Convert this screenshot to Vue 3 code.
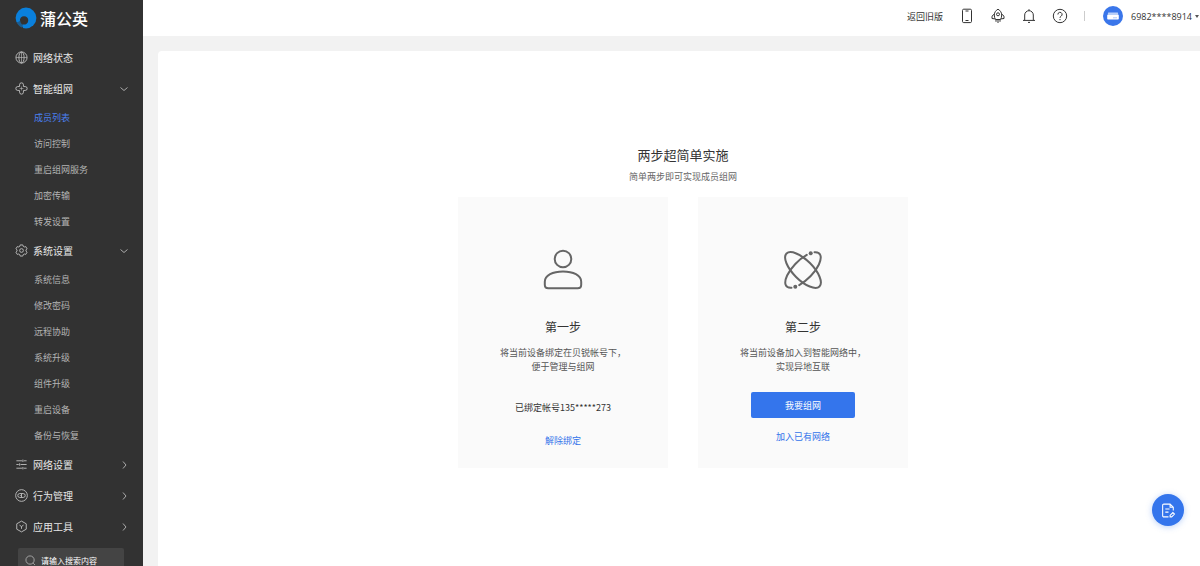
<script setup>
import { ref } from 'vue'

const keyword = ref('')
const menu = [
  { name: '网络状态', icon: 'globe' },
  {
    name: '智能组网',
    icon: 'cross',
    children: ['成员列表', '访问控制', '重启组网服务', '加密传输', '转发设置'],
  },
  {
    name: '系统设置',
    icon: 'gear',
    children: ['系统信息', '修改密码', '远程协助', '系统升级', '组件升级', '重启设备', '备份与恢复'],
  },
  { name: '网络设置', icon: 'sliders', closed: true },
  { name: '行为管理', icon: 'behavior', closed: true },
  { name: '应用工具', icon: 'tools', closed: true },
]
const active = ref('成员列表')
</script>

<template>
  <div class="layout">
    <aside class="sidebar">
      <div class="brand">
        <svg class="brand-mark" viewBox="0 0 22 22" aria-hidden="true">
          <circle cx="11" cy="11" r="10.400" fill="#0a80dc" />
          <path fill="#323232" d="M9 9.200a4.200 4.200 0 1 1-1.200 8.200c-.3 1.500-.2 2.500.3 3.600l-3.300.5L.8 17l.6-2.300c1.500.6 2.700.3 3.500-.7C4.700 11.200 6.500 9.200 9 9.200z" />
          <path fill="#0a80dc" d="M1.300 14.600c1.700.5 3 .2 3.900-1 .1 2.300 1.200 3.800 3 4.200.3 1.300-.1 2.400-1.400 2.700C4.200 19.400 2.300 17.400 1.300 14.600z" opacity=".55" />
        </svg>
        <span>蒲公英</span>
      </div>

      <nav>
        <template v-for="item in menu" :key="item.name">
          <button type="button" class="menu-item">
            <svg class="menu-icon" viewBox="0 0 14 14" aria-hidden="true">
              <g v-if="item.icon === 'globe'">
                <circle cx="7" cy="7" r="6" />
                <ellipse cx="7" cy="7" rx="2.800" ry="6" />
                <path d="M1 7h12M7 1v12" stroke-width=".7" />
              </g>
              <g v-else-if="item.icon === 'cross'">
                <path d="M4.900 4.900V3a2.100 2.100 0 0 1 4.200 0v1.900H11a2.100 2.100 0 0 1 0 4.200H9.100V11a2.100 2.100 0 0 1-4.200 0V9.100H3a2.100 2.100 0 0 1 0-4.200z" />
                <path d="M7 4.900v4.200M4.900 7h4.200" stroke-width=".6" />
              </g>
              <g v-else-if="item.icon === 'gear'">
                <path d="M5.600 1h2.800l.5 1.600 1.100.6 1.600-.4L13 5.200l-1.200 1.200v1.200L13 8.800l-1.400 2.400-1.600-.4-1.100.6-.5 1.600H5.600l-.5-1.600-1.100-.6-1.600.4L1 8.800l1.200-1.200V6.400L1 5.200l1.400-2.400 1.600.4 1.100-.6z" stroke-linejoin="round" />
                <circle cx="7" cy="7" r="2" />
              </g>
              <g v-else-if="item.icon === 'sliders'">
                <path d="M1.500 3h6M9.500 3h3M1.500 7h2.500M6 7h6.500M1.500 11h6M9.500 11h3M8.500 1.700v2.600M5 5.700v2.600M8.500 9.700v2.600" />
              </g>
              <g v-else-if="item.icon === 'behavior'">
                <circle cx="7" cy="7" r="6.300" />
                <rect x="3" y="4.900" width="8" height="4.200" rx="2.100" />
                <path d="M7 4.900v4.200M5.300 7h.8" />
              </g>
              <g v-else>
                <path d="M7 1.200l5.100 2.900v5.800L7 12.800 1.900 9.900V4.100z" stroke-linejoin="round" />
                <path d="M4.800 5.500L7 7l2.200-1.500M7 7v2.500" />
              </g>
            </svg>
            <span class="menu-name">{{ item.name }}</span>
            <svg v-if="item.children" class="chevron" viewBox="0 0 10 10" aria-hidden="true"><path d="M1.500 3.500L5 6.500l3.500-3" /></svg>
            <svg v-else-if="item.closed" class="chevron" viewBox="0 0 10 10" aria-hidden="true"><path d="M4 1.500l3 3.500-3 3.500" /></svg>
          </button>
          <ul v-if="item.children" class="submenu">
            <li v-for="child in item.children" :key="child">
              <a href="#" :class="{ active: child === active }" @click.prevent="active = child">{{ child }}</a>
            </li>
          </ul>
        </template>
      </nav>

      <label class="search">
        <svg viewBox="0 0 12 12" aria-hidden="true"><circle cx="5.500" cy="5.500" r="4.500" /><path d="M8.900 8.900l2 2" /></svg>
        <input v-model="keyword" type="text" placeholder="请输入搜索内容" aria-label="搜索" />
      </label>
    </aside>

    <div class="page">
      <header class="topbar">
        <a href="#" class="old-link">返回旧版</a>
        <div class="tools">
          <button type="button" aria-label="手机">
            <svg viewBox="0 0 16 16"><rect x="3.500" y="1.200" width="9" height="13.400" rx="1.200" /><path d="M6.500 3h3M6.500 12.500h3" /></svg>
          </button>
          <button type="button" aria-label="火箭">
            <svg viewBox="0 0 16 16">
              <path d="M8 1.200c2.300 1.300 3.700 3.300 3.700 5.800 0 1.700-.4 3.200-1.200 4.500h-5C4.700 10.200 4.300 8.700 4.300 7c0-2.500 1.400-4.500 3.700-5.800z" stroke-linejoin="round" />
              <circle cx="8" cy="6.300" r="1.500" />
              <path d="M4.300 6L2 8.200v2.300l3 .4M11.700 6L14 8.200v2.300l-3 .4M6 11.500v2.300M8 11.500v3.500M10 11.500v2.300" />
            </svg>
          </button>
          <button type="button" aria-label="通知">
            <svg viewBox="0 0 16 16"><path d="M3.700 12.300V7a4.300 4.300 0 0 1 8.600 0v5.300M2 12.400h12M8 1.200v1.500M7 14.400h2" /></svg>
          </button>
          <button type="button" aria-label="帮助">
            <svg viewBox="0 0 16 16"><circle cx="8" cy="8" r="6.700" /><path d="M5.900 6.500a2.100 2.100 0 1 1 3.200 1.700c-.8.500-1.100.8-1.100 1.600M8 11v1.200" /></svg>
          </button>
        </div>
        <span class="divider"></span>
        <button type="button" class="account">
          <svg class="avatar" viewBox="0 0 20 20" aria-hidden="true">
            <circle cx="10" cy="10" r="10" fill="#3a76ea" />
            <path d="M5.200 6.500h9.600l.9 3.500H4.300z" fill="#b9cff8" />
            <rect x="4.200" y="9" width="11.600" height="4.600" rx=".8" fill="#fff" />
            <path d="M10.500 11.800h1M12.500 11.800h1" stroke="#3a76ea" stroke-width=".8" />
          </svg>
          <span>6982****8914</span>
          <i class="caret"></i>
        </button>
      </header>

      <main class="panel">
        <h1>两步超简单实施</h1>
        <p class="subtitle">简单两步即可实现成员组网</p>
        <div class="cards">
          <section class="card">
            <svg class="card-icon" viewBox="0 0 42 42" aria-hidden="true">
              <circle cx="21" cy="10" r="8.300" />
              <path d="M2.800 32.800c0-6.500 8-10.300 18.200-10.300s18.200 3.800 18.200 10.300v3c0 2.200-1.300 3.500-3.500 3.500H6.300c-2.200 0-3.500-1.300-3.500-3.500z" />
            </svg>
            <h2>第一步</h2>
            <p class="desc">将当前设备绑定在贝锐帐号下，<br />便于管理与组网</p>
            <p class="bound">已绑定帐号135*****273</p>
            <a href="#" class="link">解除绑定</a>
          </section>
          <section class="card">
            <svg class="card-icon" viewBox="0 0 42 42" aria-hidden="true">
              <ellipse cx="21" cy="21" rx="23.300" ry="9.800" transform="rotate(45 21 21)" />
              <path d="M32.500 3.200A23.300 9.800 -45 0 1 17.200 36.100M9.500 38.800A23.300 9.800 -45 0 1 24.800 5.900" />
              <g class="dot"><circle cx="28.700" cy="4.300" r="2" /><circle cx="13.300" cy="37.700" r="2" /></g>
            </svg>
            <h2>第二步</h2>
            <p class="desc">将当前设备加入到智能网络中，<br />实现异地互联</p>
            <button type="button" class="primary">我要组网</button>
            <a href="#" class="link">加入已有网络</a>
          </section>
        </div>
      </main>
    </div>

    <button type="button" class="feedback" aria-label="反馈">
      <svg viewBox="0 0 16 16"><path d="M8 14H3.600A1.100 1.100 0 0 1 2.500 12.900V3.100A1.100 1.100 0 0 1 3.600 2H9.500L12.500 5V8M9.500 2v3H12.500M5 6.500h4M5 9.500h3M9.500 12.500l2.600-2.600 1.500 1.500-2.600 2.600H9.500z" /></svg>
    </button>
  </div>
</template>

<style>
body {
  margin: 0;
  overflow: hidden;
}
</style>

<style scoped>
.layout {
  display: flex;
  height: 100vh;
  overflow: hidden;
  background: #f2f2f2;
  color: #333;
  font-family: "Noto Sans CJK SC", sans-serif;
  font-size: 9px;
}
button {
  margin: 0;
  padding: 0;
  border: 0;
  background: none;
  color: inherit;
  font: inherit;
  cursor: pointer;
}
a {
  color: inherit;
  text-decoration: none;
}
h1, h2, p, ul {
  margin: 0;
  padding: 0;
  font-weight: 400;
}
svg {
  display: block;
  flex: none;
  fill: none;
  stroke: currentColor;
}

.sidebar {
  flex: none;
  width: 143px;
  overflow: hidden;
  background: #323232;
  color: #e6e6e6;
}
.brand {
  display: flex;
  align-items: center;
  gap: 3px;
  height: 36px;
  margin-bottom: 6px;
  padding-left: 15px;
  color: #fff;
  font-size: 16px;
  font-weight: 500;
}
.brand-mark {
  width: 22px;
  height: 22px;
  stroke: none;
}
.menu-item {
  display: flex;
  align-items: center;
  width: 100%;
  height: 31px;
  padding: 0 14px 0 15px;
  font-size: 10px;
  text-align: left;
}
.menu-icon {
  width: 13px;
  height: 13px;
  margin-right: 5px;
  color: #bdbdbd;
}
.menu-name {
  flex: 1;
}
.chevron {
  width: 10px;
  height: 10px;
  color: #aaa;
}
.submenu {
  padding-top: 1px;
  list-style: none;
}
.submenu a {
  display: block;
  padding-left: 34px;
  color: #b4b4b4;
  line-height: 26px;
}
.submenu .active {
  color: #4a80f0;
}
.search {
  display: flex;
  align-items: center;
  gap: 5px;
  height: 24px;
  margin: 6px 19px 12px 18px;
  padding: 0 7px;
  border-radius: 2px;
  background: #444;
}
.search svg {
  width: 11px;
  height: 11px;
  color: #aaa;
}
.search input {
  flex: 1;
  min-width: 0;
  padding: 0;
  border: 0;
  outline: 0;
  background: none;
  color: #fff;
  font: inherit;
  font-size: 8px;
}
.search input::placeholder {
  color: #fff;
  opacity: 1;
}

.page {
  display: flex;
  flex: 1;
  flex-direction: column;
  min-width: 0;
}
.topbar {
  display: flex;
  flex: none;
  align-items: center;
  justify-content: flex-end;
  height: 36px;
  padding: 0 1px 4px 0;
  box-sizing: border-box;
  background: #fff;
}
.tools {
  display: flex;
  gap: 15px;
  margin: 0 16px;
}
.tools svg {
  width: 16px;
  height: 16px;
}
.divider {
  width: 1px;
  height: 10px;
  margin-right: 18px;
  background: #ccc;
}
.account {
  display: flex;
  align-items: center;
  font-family: "Open Sans", sans-serif;
}
.avatar {
  width: 20px;
  height: 20px;
  margin-right: 8px;
  stroke: none;
}
.caret {
  margin-left: 3px;
  border: 2px solid transparent;
  border-top: 3px solid #555;
  border-bottom: 0;
}
.panel {
  flex: 1;
  margin: 15px 0 0 15px;
  padding: 94px 0 0 8px;
  border-radius: 4px 0 0 0;
  background: #fff;
  text-align: center;
}
.panel h1 {
  font-size: 13px;
  line-height: 20px;
}
.subtitle {
  margin-top: 4px;
  color: #666;
  line-height: 16px;
}
.cards {
  display: flex;
  justify-content: center;
  gap: 30px;
  margin-top: 12px;
}
.card {
  display: flex;
  flex-direction: column;
  align-items: center;
  width: 210px;
  height: 271px;
  padding-top: 52px;
  box-sizing: border-box;
  background: #fafafa;
}
.card-icon {
  width: 42px;
  height: 42px;
  color: #666;
  stroke-width: 2;
  stroke-linecap: round;
}
.dot {
  fill: currentColor;
  stroke: none;
}
.card h2 {
  margin-top: 26px;
  font-size: 12px;
  line-height: 20px;
}
.desc {
  margin-top: 9px;
  color: #555;
  line-height: 14px;
}
.bound {
  margin-top: 26px;
  line-height: 16px;
}
.link {
  color: #3273ea;
  line-height: 16px;
}
.bound + .link {
  margin-top: 17px;
}
.primary {
  width: 104px;
  height: 26px;
  margin-top: 18px;
  border-radius: 2px;
  background: #3475ec;
  color: #fff;
}
.primary + .link {
  margin-top: 11px;
}
.feedback {
  position: fixed;
  right: 16px;
  bottom: 40px;
  display: grid;
  place-items: center;
  width: 32px;
  height: 32px;
  border-radius: 50%;
  background: #3475ec;
  box-shadow: 0 1px 6px rgba(52, 117, 236, 0.35);
  color: #fff;
}
.feedback svg {
  width: 17px;
  height: 17px;
}
</style>
